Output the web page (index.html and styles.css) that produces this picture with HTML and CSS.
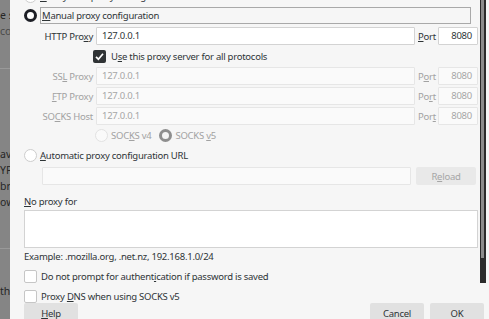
FILE: index.html
```html
<!DOCTYPE html>
<html lang="en">
<head>
  <meta charset="UTF-8" />
  <title>Connection Settings</title>
  <link rel="stylesheet" href="styles.css">
</head>
<body>

  <!-- page behind the dialog -->
  <div class="backdrop">
    <div class="bd-line l1">e s</div>
    <div class="bd-line l2 faint">co</div>
    <div class="bd-rule r1"></div>
    <div class="bd-line l3">av</div>
    <div class="bd-line">YP</div>
    <div class="bd-line">br</div>
    <div class="bd-line">ow</div>
    <div class="bd-rule r2"></div>
    <div class="bd-line l4">th</div>
  </div>

  <div class="dialog">
    <div class="scroll">
      <div class="content">

        <div class="row row-system">
          <span class="radio"></span>
          <span class="label"><u>U</u>se system proxy settings</span>
        </div>

        <div class="row row-manual">
          <span class="radio on"></span>
          <span class="label focus"><u>M</u>anual proxy configuration</span>
        </div>

        <div class="proxy-grid">
          <span class="plabel">HTTP Pro<u>x</u>y</span>
          <div class="field">127.0.0.1</div>
          <span class="port"><u>P</u>ort</span>
          <div class="field num">8080</div>

          <div class="row row-all">
            <span class="check on">
              <svg width="13" height="13" viewBox="0 0 13 13"><path d="M3 6.8 L5.4 9.2 L10 3.8" fill="none" stroke="#fff" stroke-width="1.7"/></svg>
            </span>
            <span class="label">U<u>s</u>e this proxy server for all protocols</span>
          </div>

          <span class="plabel off">SS<u>L</u> Proxy</span>
          <div class="field off">127.0.0.1</div>
          <span class="port off">P<u>o</u>rt</span>
          <div class="field num off">8080</div>

          <span class="plabel off"><u>F</u>TP Proxy</span>
          <div class="field off">127.0.0.1</div>
          <span class="port off">Po<u>r</u>t</span>
          <div class="field num off">8080</div>

          <span class="plabel off">SO<u>C</u>KS Host</span>
          <div class="field off">127.0.0.1</div>
          <span class="port off">Por<u>t</u></span>
          <div class="field num off">8080</div>
        </div>

        <div class="row row-socks">
          <span class="radio off"></span>
          <span class="label off">SOC<u>K</u>S v4</span>
          <span class="radio on off v5"></span>
          <span class="label off">SOCKS <u>v</u>5</span>
        </div>

        <div class="row row-auto">
          <span class="radio"></span>
          <span class="label"><u>A</u>utomatic proxy configuration URL</span>
        </div>

        <div class="url-row">
          <div class="field url off"></div>
          <button class="btn reload" disabled>R<u>e</u>load</button>
        </div>

        <div class="no-proxy"><u>N</u>o proxy for</div>
        <div class="textarea"></div>
        <div class="example">Example: .mozilla.org, .net.nz, 192.168.1.0/24</div>

        <div class="row row-check1">
          <span class="check"></span>
          <span class="label">Do not prompt for authent<u>i</u>cation if password is saved</span>
        </div>
        <div class="row row-check2">
          <span class="check"></span>
          <span class="label">Proxy <u>D</u>NS when using SOCKS v5</span>
        </div>

      </div>
      <div class="scrollbar"><div class="thumb"></div></div>
    </div>

    <div class="buttons">
      <button class="btn"><u>H</u>elp</button>
      <button class="btn push">Cancel</button>
      <button class="btn">OK</button>
    </div>
  </div>

</body>
</html>
```
FILE: styles.css
```css
html, body {
  margin: 0;
  height: 100%;
}

body {
  display: flex;
  overflow: hidden;
  font-family: 'Noto Sans', 'Open Sans', sans-serif;
  font-size: 9.5px;
  letter-spacing: -0.25px;
  color: #2e3436;
  background: #f6f6f6;
}

u {
  text-decoration-thickness: 1px;
  text-underline-offset: 1px;
}

/* backdrop page */
.backdrop {
  width: 10px;
  flex: none;
  overflow: hidden;
  white-space: nowrap;
  background: #858585;
  color: #262626;
  font-size: 10.5px;
  letter-spacing: 0;
}

.bd-line {
  height: 16px;
  line-height: 16px;
}

.bd-line.l1 { margin-top: 7px; }
.bd-line.faint { color: #4a4a4a; }

.bd-rule {
  height: 1px;
  background: #999;
}

.bd-rule.r1 { margin-top: 29px; }
.bd-line.l3 { margin-top: 77px; }
.bd-rule.r2 { margin-top: 38px; }
.bd-line.l4 { margin-top: 34px; }

/* dialog */
.dialog {
  flex: 1;
  display: flex;
  flex-direction: column;
  min-width: 0;
}

.scroll {
  height: 303px;
  flex: none;
  display: flex;
  overflow: hidden;
}

.content {
  flex: 1;
  padding: 0 2px 0 14px;
}

.scrollbar {
  width: 6px;
  height: 283px;
  margin-right: 3px;
  background: #2b2b2b;
  box-sizing: border-box;
  padding: 0 2px 0 1px;
}

.thumb {
  height: 258px;
  background: #8c8c8c;
}

.row {
  display: flex;
  align-items: center;
  gap: 3px;
  white-space: nowrap;
}

.row-system {
  height: 20px;
  margin-top: -14px;
}

.row-manual {
  height: 17px;
  margin-top: 1px;
  margin-right: 7px;
}

.label.focus {
  flex: 1;
  align-self: stretch;
  display: flex;
  align-items: center;
  padding-left: 1px;
  border: 1px solid #a9a9a9;
}

.off {
  color: #a2a2a2;
}

/* radio & check */
.radio {
  width: 13px;
  height: 13px;
  flex: none;
  box-sizing: border-box;
  border-radius: 50%;
  border: 1px solid #cdcdcd;
  background: #fff;
}

.radio.on {
  border: 3.5px solid #1d1f26;
}

.radio.off {
  border-color: #e2e2e2;
  background: #fafafa;
}

.radio.on.off {
  border: 3.5px solid #8e8e8e;
  background: #f4f4f4;
}

.check {
  width: 13px;
  height: 13px;
  flex: none;
  box-sizing: border-box;
  border: 1px solid #c6c6c6;
  border-radius: 2px;
  background: #fff;
}

.check.on {
  border: none;
  background: #2f3335;
}

.check svg {
  display: block;
}

/* proxy fields */
.proxy-grid {
  display: grid;
  grid-template-columns: 72px 1fr 23px 40px;
  grid-auto-rows: 18px;
  row-gap: 2px;
  margin-top: 3px;
  align-items: center;
}

.plabel {
  text-align: right;
  padding-right: 3px;
  white-space: nowrap;
}

.port {
  padding-left: 3px;
}

.field {
  height: 18px;
  box-sizing: border-box;
  border: 1px solid #d3d3d3;
  border-radius: 1px;
  background: #fff;
  padding: 0 5px;
  line-height: 16px;
}

.field.off {
  border-color: #e6e6e6;
  background: #fafafa;
  color: #a6a6a6;
}

.field.num {
  text-align: right;
}

.row-all {
  grid-column: 2 / -1;
  height: 17px;
  margin-left: -3px;
  gap: 5px;
}

.row-socks {
  height: 20px;
  padding-left: 71px;
}

.row-socks .v5 {
  margin-left: 5px;
}

.row-auto {
  height: 20px;
}

.url-row {
  display: flex;
  gap: 5px;
  margin-top: 2px;
  padding-left: 18px;
  padding-right: 2px;
  height: 18px;
}

.field.url {
  flex: 1;
}

.btn {
  font: inherit;
  letter-spacing: inherit;
  color: #2e3436;
  border: none;
  border-radius: 2px;
  background: #e1e1e1;
  padding: 0;
  height: 20px;
  width: 54px;
}

.btn.reload {
  width: 60px;
  height: 18px;
  background: #e9e9e9;
  color: #a6a6a6;
}

.no-proxy {
  height: 16px;
  line-height: 16px;
  margin-top: 9px;
}

.textarea {
  height: 38px;
  box-sizing: border-box;
  border: 1px solid #d3d3d3;
  background: #fff;
}

.example {
  height: 18px;
  line-height: 18px;
}

.row-check1 {
  height: 18px;
  margin-top: 1px;
  gap: 4px;
}

.row-check2 {
  height: 18px;
  margin-top: 2px;
  gap: 4px;
}

.buttons {
  display: flex;
  gap: 6px;
  padding: 0 5px 0 14px;
}

.push {
  margin-left: auto;
}
```
